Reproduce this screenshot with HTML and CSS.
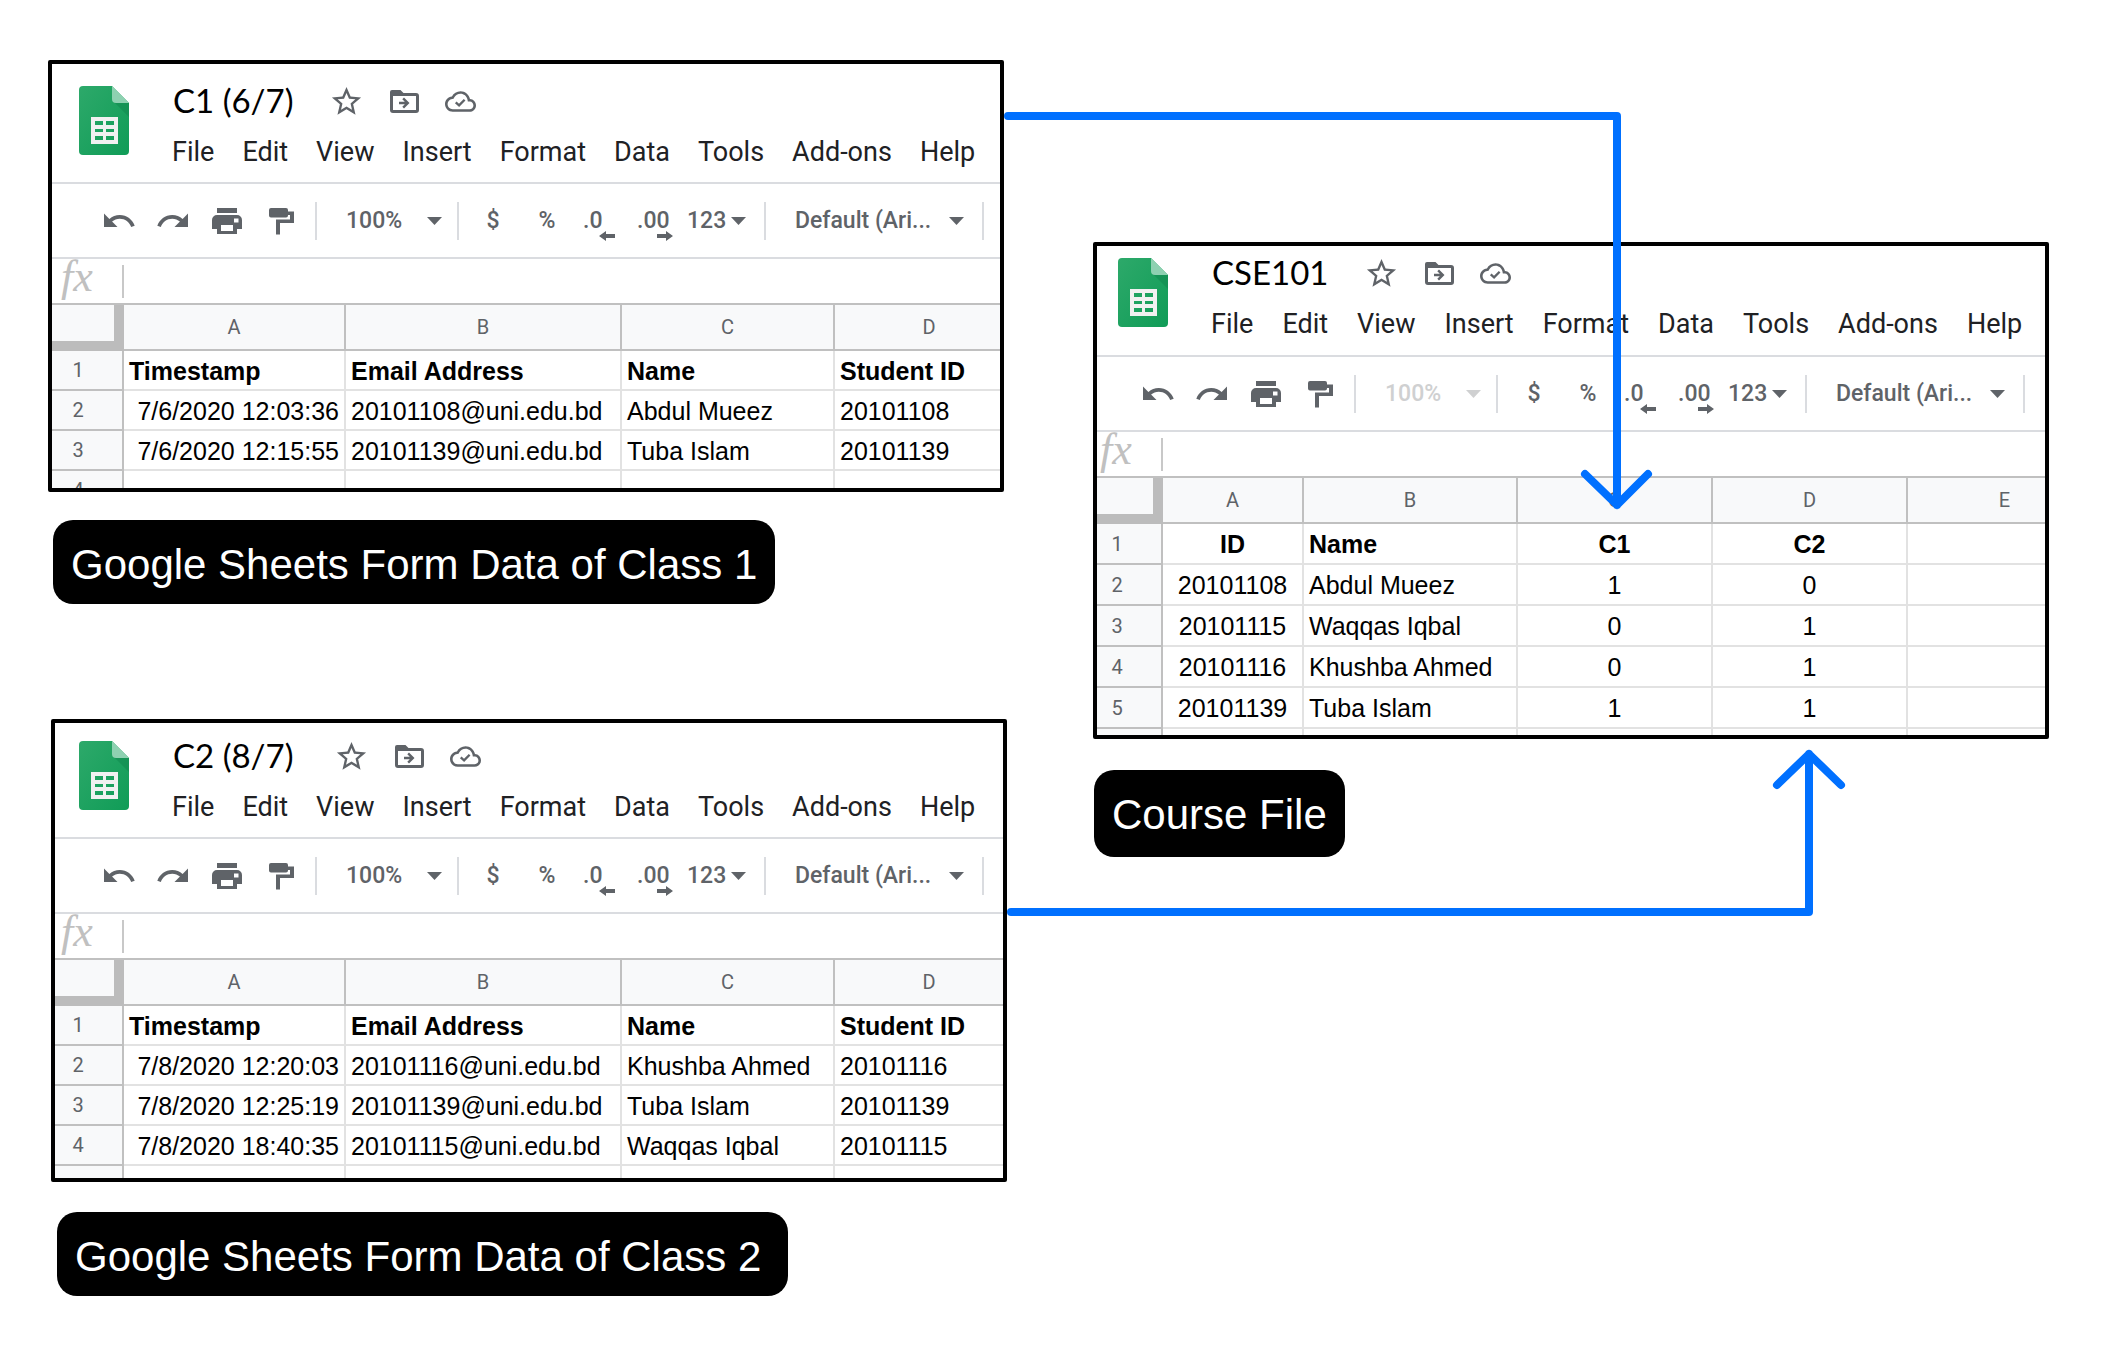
FILE: index.html
```html
<!DOCTYPE html>
<html lang="en">
<head>
<meta charset="utf-8">
<title>Attendance sheets flow</title>
<link rel="stylesheet" href="styles.css">
</head>
<body>
<svg class="sprite" aria-hidden="true">
  <symbol id="logo" viewBox="0 0 50 69">
    <path fill="url(#leaf)" d="M4 0H33L50 17V65a4 4 0 0 1-4 4H4a4 4 0 0 1-4-4V4a4 4 0 0 1 4-4z"/>
    <path fill="#128b50" opacity=".6" d="M35 16L50 31V17z"/>
    <path fill="#8ed1b1" d="M33 0L50 17H37a4 4 0 0 1-4-4z"/>
    <path fill="#f1f1f1" fill-rule="evenodd" d="M12 31H39V58H12zM16 35V39H24V35zM27 35V39H35V35zM16 43V46H24V43zM27 43V46H35V43zM16 50V54H24V50zM27 50V54H35V50z"/>
  </symbol>
  <symbol id="star" viewBox="0 0 24 24"><path d="M22 9.24l-7.19-.62L12 2 9.19 8.63 2 9.24l5.46 4.73L5.82 21 12 17.27 18.18 21l-1.63-7.03L22 9.24zM12 15.4l-3.76 2.27 1-4.28-3.32-2.88 4.38-.38L12 6.1l1.71 4.04 4.38.38-3.32 2.88 1 4.28L12 15.4z"/></symbol>
  <symbol id="move" viewBox="0 0 35 35"><path fill-rule="evenodd" d="M5 6H13.500L16.500 9H29a3 3 0 0 1 3 3V26a3 3 0 0 1-3 3H6a3 3 0 0 1-3-3V8a2 2 0 0 1 2-2zM6 12V26H29V12z"/><path d="M17 13.500L22.500 19L17 24.500L15.300 22.800L17.800 20.300H12V17.700H17.800L15.300 15.200z"/></symbol>
  <symbol id="cloud" viewBox="0 0 24 24"><path d="M19.350 10.040C18.670 6.590 15.640 4 12 4 9.110 4 6.610 5.640 5.360 8.040 2.350 8.360 0 10.910 0 14c0 3.310 2.690 6 6 6h13c2.760 0 5-2.240 5-5 0-2.640-2.050-4.780-4.650-4.960zM19 18H6c-2.210 0-4-1.790-4-4 0-2.050 1.530-3.760 3.560-3.970l1.070-.11.5-.95C8.080 7.140 9.940 6 12 6c2.620 0 4.880 1.860 5.390 4.430l.3 1.500 1.530.11c1.560.1 2.780 1.410 2.780 2.960 0 1.650-1.350 3-3 3z"/><path fill="none" stroke="currentColor" stroke-width="1.800" d="M8.300 12.700L10.900 15L15.200 10.600"/></symbol>
  <symbol id="undo" viewBox="0 0 24 24"><path d="M12.500 8c-2.650 0-5.050.99-6.900 2.600L2 7v9h9l-3.620-3.620c1.390-1.160 3.160-1.880 5.120-1.880 3.540 0 6.550 2.310 7.600 5.500l2.370-.78C21.080 11.030 17.150 8 12.500 8z"/></symbol>
  <symbol id="redo" viewBox="0 0 24 24"><path d="M18.400 10.600C16.550 8.990 14.150 8 11.500 8c-4.650 0-8.580 3.030-9.960 7.220L3.900 16c1.050-3.190 4.050-5.500 7.600-5.500 1.950 0 3.730.72 5.120 1.880L13 16h9V7l-3.600 3.600z"/></symbol>
  <symbol id="print" viewBox="0 0 36 36"><path fill-rule="evenodd" d="M8 5H28V10H8zM8 12H28a5 5 0 0 1 5 5V26H28V31H8V26H3V17a5 5 0 0 1 5-5zM12 22V28H24V22zM25 15.500V19.500H29.500V15.500z"/></symbol>
  <symbol id="paint" viewBox="0 0 36 36"><path d="M8 5H23a2 2 0 0 1 2 2V8.500H31V20H17V31.500H13V16.500H27V12H25V12.500a2 2 0 0 1-2 2H8a2 2 0 0 1-2-2V7a2 2 0 0 1 2-2z"/></symbol>
  <symbol id="caret" viewBox="0 0 15 8"><path d="M0 0H15L7.500 8z"/></symbol>
  <symbol id="arrow" viewBox="0 0 16 10"><path d="M0 3H9V0L16 5L9 10V7H0z"/></symbol>
  <defs><linearGradient id="leaf" x1="0" y1="0" x2="1" y2="1"><stop offset="0" stop-color="#2da96a"/><stop offset="1" stop-color="#109c57"/></linearGradient></defs>
</svg>

<main class="diagram">
  <div class="sources">
    <figure class="node node-first">
      <section class="sheet" aria-label="C1 (6/7)">
        <div class="sheet-body">
          <header class="head">
            <svg class="logo"><use href="#logo"/></svg>
            <div>
              <div class="title-row">
                <h2 class="title">C1 (6/7)</h2>
                <button class="icon-button" aria-label="Star"><svg class="icon-title"><use href="#star"/></svg></button>
                <button class="icon-button" aria-label="Move"><svg class="icon-title"><use href="#move"/></svg></button>
                <button class="icon-button" aria-label="Saved to Drive"><svg class="icon-cloud"><use href="#cloud"/></svg></button>
              </div>
              <nav class="menu">
                <button>File</button><button>Edit</button><button>View</button><button>Insert</button><button>Format</button><button>Data</button><button>Tools</button><button>Add-ons</button><button>Help</button>
              </nav>
            </div>
          </header>
          <div class="toolbar">
            <button class="tool" aria-label="Undo"><svg class="icon"><use href="#undo"/></svg></button>
            <button class="tool" aria-label="Redo"><svg class="icon"><use href="#redo"/></svg></button>
            <button class="tool" aria-label="Print"><svg class="icon"><use href="#print"/></svg></button>
            <button class="tool" aria-label="Paint format"><svg class="icon"><use href="#paint"/></svg></button>
            <span class="rule"></span>
            <label class="picker picker-zoom"><select aria-label="Zoom"><option>100%</option></select><svg class="caret"><use href="#caret"/></svg></label>
            <span class="rule"></span>
            <button class="tool">$</button>
            <button class="tool">%</button>
            <button class="tool decimals">.0<svg class="step step-less"><use href="#arrow"/></svg></button>
            <button class="tool decimals">.00<svg class="step"><use href="#arrow"/></svg></button>
            <button class="formats">123<svg class="caret"><use href="#caret"/></svg></button>
            <span class="rule"></span>
            <label class="picker picker-font"><select aria-label="Font"><option>Default (Ari...</option></select><svg class="caret"><use href="#caret"/></svg></label>
            <span class="rule"></span>
          </div>
          <label class="formula"><span class="fx">fx</span><input aria-label="Formula"></label>
          <div class="view">
            <table>
              <colgroup><col class="c-gutter"><col class="c-stamp"><col class="c-mail"><col class="c-person"><col class="c-sid"></colgroup>
              <thead><tr><th class="corner"></th><th>A</th><th>B</th><th>C</th><th>D</th></tr></thead>
              <tbody>
                <tr class="names"><th>1</th><td>Timestamp</td><td>Email Address</td><td>Name</td><td>Student ID</td></tr>
                <tr><th>2</th><td class="right">7/6/2020 12:03:36</td><td>20101108@uni.edu.bd</td><td>Abdul Mueez</td><td>20101108</td></tr>
                <tr><th>3</th><td class="right">7/6/2020 12:15:55</td><td>20101139@uni.edu.bd</td><td>Tuba Islam</td><td>20101139</td></tr>
                <tr><th>4</th><td></td><td></td><td></td><td></td></tr>
              </tbody>
            </table>
          </div>
        </div>
      </section>
      <figcaption class="caption">Google Sheets Form Data of Class 1</figcaption>
    </figure>

    <figure class="node node-second">
      <section class="sheet" aria-label="C2 (8/7)">
        <div class="sheet-body">
          <header class="head">
            <svg class="logo"><use href="#logo"/></svg>
            <div>
              <div class="title-row">
                <h2 class="title">C2 (8/7)</h2>
                <button class="icon-button" aria-label="Star"><svg class="icon-title"><use href="#star"/></svg></button>
                <button class="icon-button" aria-label="Move"><svg class="icon-title"><use href="#move"/></svg></button>
                <button class="icon-button" aria-label="Saved to Drive"><svg class="icon-cloud"><use href="#cloud"/></svg></button>
              </div>
              <nav class="menu">
                <button>File</button><button>Edit</button><button>View</button><button>Insert</button><button>Format</button><button>Data</button><button>Tools</button><button>Add-ons</button><button>Help</button>
              </nav>
            </div>
          </header>
          <div class="toolbar">
            <button class="tool" aria-label="Undo"><svg class="icon"><use href="#undo"/></svg></button>
            <button class="tool" aria-label="Redo"><svg class="icon"><use href="#redo"/></svg></button>
            <button class="tool" aria-label="Print"><svg class="icon"><use href="#print"/></svg></button>
            <button class="tool" aria-label="Paint format"><svg class="icon"><use href="#paint"/></svg></button>
            <span class="rule"></span>
            <label class="picker picker-zoom"><select aria-label="Zoom"><option>100%</option></select><svg class="caret"><use href="#caret"/></svg></label>
            <span class="rule"></span>
            <button class="tool">$</button>
            <button class="tool">%</button>
            <button class="tool decimals">.0<svg class="step step-less"><use href="#arrow"/></svg></button>
            <button class="tool decimals">.00<svg class="step"><use href="#arrow"/></svg></button>
            <button class="formats">123<svg class="caret"><use href="#caret"/></svg></button>
            <span class="rule"></span>
            <label class="picker picker-font"><select aria-label="Font"><option>Default (Ari...</option></select><svg class="caret"><use href="#caret"/></svg></label>
            <span class="rule"></span>
          </div>
          <label class="formula"><span class="fx">fx</span><input aria-label="Formula"></label>
          <div class="view">
            <table>
              <colgroup><col class="c-gutter"><col class="c-stamp"><col class="c-mail"><col class="c-person"><col class="c-sid"></colgroup>
              <thead><tr><th class="corner"></th><th>A</th><th>B</th><th>C</th><th>D</th></tr></thead>
              <tbody>
                <tr class="names"><th>1</th><td>Timestamp</td><td>Email Address</td><td>Name</td><td>Student ID</td></tr>
                <tr><th>2</th><td class="right">7/8/2020 12:20:03</td><td>20101116@uni.edu.bd</td><td>Khushba Ahmed</td><td>20101116</td></tr>
                <tr><th>3</th><td class="right">7/8/2020 12:25:19</td><td>20101139@uni.edu.bd</td><td>Tuba Islam</td><td>20101139</td></tr>
                <tr><th>4</th><td class="right">7/8/2020 18:40:35</td><td>20101115@uni.edu.bd</td><td>Waqqas Iqbal</td><td>20101115</td></tr>
                <tr><th></th><td></td><td></td><td></td><td></td></tr>
              </tbody>
            </table>
          </div>
        </div>
      </section>
      <figcaption class="caption">Google Sheets Form Data of Class 2</figcaption>
    </figure>
  </div>

  <figure class="node node-course">
    <section class="sheet" aria-label="CSE101">
      <div class="sheet-body">
        <header class="head">
          <svg class="logo"><use href="#logo"/></svg>
          <div>
            <div class="title-row">
              <h2 class="title">CSE101</h2>
              <button class="icon-button" aria-label="Star"><svg class="icon-title"><use href="#star"/></svg></button>
              <button class="icon-button" aria-label="Move"><svg class="icon-title"><use href="#move"/></svg></button>
              <button class="icon-button" aria-label="Saved to Drive"><svg class="icon-cloud"><use href="#cloud"/></svg></button>
            </div>
            <nav class="menu">
              <button>File</button><button>Edit</button><button>View</button><button>Insert</button><button>Format</button><button>Data</button><button>Tools</button><button>Add-ons</button><button>Help</button>
            </nav>
          </div>
        </header>
        <div class="toolbar">
          <button class="tool" aria-label="Undo"><svg class="icon"><use href="#undo"/></svg></button>
          <button class="tool" aria-label="Redo"><svg class="icon"><use href="#redo"/></svg></button>
          <button class="tool" aria-label="Print"><svg class="icon"><use href="#print"/></svg></button>
          <button class="tool" aria-label="Paint format"><svg class="icon"><use href="#paint"/></svg></button>
          <span class="rule"></span>
          <label class="picker picker-zoom is-disabled"><select aria-label="Zoom" disabled><option>100%</option></select><svg class="caret"><use href="#caret"/></svg></label>
          <span class="rule"></span>
          <button class="tool">$</button>
          <button class="tool">%</button>
          <button class="tool decimals">.0<svg class="step step-less"><use href="#arrow"/></svg></button>
          <button class="tool decimals">.00<svg class="step"><use href="#arrow"/></svg></button>
          <button class="formats">123<svg class="caret"><use href="#caret"/></svg></button>
          <span class="rule"></span>
          <label class="picker picker-font"><select aria-label="Font"><option>Default (Ari...</option></select><svg class="caret"><use href="#caret"/></svg></label>
          <span class="rule"></span>
        </div>
        <label class="formula"><span class="fx">fx</span><input aria-label="Formula"></label>
        <div class="view">
          <table>
            <colgroup><col class="c-gutter"><col class="c-id"><col class="c-name"><col class="c-mark"><col class="c-mark"><col class="c-mark"></colgroup>
            <thead><tr><th class="corner"></th><th>A</th><th>B</th><th>C</th><th>D</th><th>E</th></tr></thead>
            <tbody>
              <tr class="names"><th>1</th><td class="center">ID</td><td>Name</td><td class="center">C1</td><td class="center">C2</td><td></td></tr>
              <tr><th>2</th><td class="center">20101108</td><td>Abdul Mueez</td><td class="center">1</td><td class="center">0</td><td></td></tr>
              <tr><th>3</th><td class="center">20101115</td><td>Waqqas Iqbal</td><td class="center">0</td><td class="center">1</td><td></td></tr>
              <tr><th>4</th><td class="center">20101116</td><td>Khushba Ahmed</td><td class="center">0</td><td class="center">1</td><td></td></tr>
              <tr><th>5</th><td class="center">20101139</td><td>Tuba Islam</td><td class="center">1</td><td class="center">1</td><td></td></tr>
              <tr><th></th><td></td><td></td><td></td><td></td><td></td></tr>
            </tbody>
          </table>
        </div>
      </div>
    </section>
    <figcaption class="caption">Course File</figcaption>
    <svg class="links" viewBox="0 0 850 810" aria-hidden="true">
      <path d="M4 4H613V393M581 362L613 393L644 362"/>
      <path d="M7 800H805V642M773 673L805 642L837 673"/>
    </svg>
  </figure>
</main>
</body>
</html>
```

FILE: styles.css
```css
* { box-sizing: border-box; }

body {
  margin: 0;
  background: #fff;
  color: #000;
  font-family: Roboto, "Liberation Sans", sans-serif;
}

svg { display: block; flex: none; fill: currentColor; }
.sprite { position: absolute; width: 0; height: 0; }

button, select, input {
  appearance: none;
  margin: 0;
  padding: 0;
  border: 0;
  background: none;
  color: inherit;
  font: inherit;
}

.diagram {
  display: grid;
  grid-template-columns: minmax(0, 1fr) minmax(0, 1fr);
  gap: 89px;
  align-items: start;
  padding: 60px 57px 50px 48px;
}

.sources { display: grid; gap: 115px; }
.node { --title-gap: 13px; --menu-gap: 28px; --tool-gap: 7px; margin: 0; min-width: 0; }

.node-first { --bleed: -18px; --head-top: 17px; --view: 183px; --row: 40px; --drop: 28px; --indent: 5px; }
.node-second { --bleed: -21px; --head-top: 13px; --view: 218px; --row: 40px; --drop: 30px; --indent: 6px; --title-gap: 18px; margin: 0 -3px 0 3px; }
.node-course { --bleed: -24px; --head-top: 7px; --view: 257px; --row: 41px; --drop: 31px; --indent: 1px; --menu-gap: 29px; --tool-gap: 9px; position: relative; margin-top: 182px; }

/* Sheet window */
.sheet { border: 4px solid #000; border-radius: 2px; overflow: hidden; background: #fff; }
.sheet-body { margin-left: var(--bleed); }

.head {
  display: flex;
  gap: 43px;
  padding: var(--head-top) 0 14px 45px;
  border-bottom: 2px solid #dadce0;
}
.node-course .head { padding-bottom: 15px; }
.logo { width: 50px; height: 69px; margin-top: 5px; }

.title-row { display: flex; align-items: center; gap: 23px; height: 40px; margin-bottom: 15px; color: #5f6368; }
.title { margin: 0 var(--title-gap) 0 0; padding: 0 0 2px 1px; color: #000; font: 400 33px/36px Lato, sans-serif; white-space: nowrap; }
.icon-title { width: 35px; height: 35px; }
.icon-cloud { width: 31px; height: 31px; }

.menu { display: flex; gap: var(--menu-gap); color: #202124; font-size: 27px; line-height: 32px; white-space: nowrap; }

.toolbar {
  display: flex;
  align-items: center;
  height: 75px;
  padding-left: 58px;
  border-bottom: 2px solid #dadce0;
  color: #5f6368;
  font-size: 23px;
  font-weight: 500;
  line-height: 32px;
}
.tool { flex: none; width: 54px; padding: 0 9px; }
.icon { width: 36px; height: 36px; }
.rule { flex: none; width: 2px; height: 38px; margin-left: 7px; background: #dadce0; }
.caret { width: 15px; height: 8px; }

.picker { display: flex; flex: none; align-items: center; justify-content: space-between; padding-left: 29px; }
.picker-zoom { width: 133px; padding-right: 8px; }
.picker-zoom + .rule { margin-right: var(--tool-gap); }
.picker-font { width: 209px; padding-right: 11px; }
.is-disabled { color: #cfd0d1; }
.picker select { opacity: 1; }

.decimals { position: relative; text-align: left; }
.step { position: absolute; right: 9px; bottom: -4px; width: 16px; height: 10px; }
.step-less { right: 13px; rotate: 180deg; }
.formats { display: flex; flex: none; align-items: center; gap: 5px; width: 75px; padding-left: 5px; }

.formula { display: flex; align-items: center; height: 46px; border-bottom: 2px solid #c0c0c0; }
.fx { width: 88px; padding: 0 0 8px 27px; color: #c0c0c0; font: italic 44px/36px "Liberation Serif", serif; }
.formula input { flex: 1; min-width: 0; height: 33px; border-left: 2px solid #c8c8c8; }

/* Cells */
.view { height: var(--view); overflow: hidden; }
table { width: 0; border-collapse: separate; border-spacing: 0; table-layout: fixed; }
.c-gutter { width: 90px; }
.c-stamp { width: 222px; }
.c-mail { width: 276px; }
.c-person { width: 213px; }
.c-sid { width: 190px; }
.c-id { width: 141px; }
.c-name { width: 214px; }
.c-mark { width: 195px; }

th {
  height: 46px;
  padding: 0;
  border: solid #c0c0c0;
  border-width: 0 2px 2px 0;
  background: #f8f9fa;
  color: #5f6368;
  font-size: 20px;
  font-weight: 400;
  line-height: 24px;
}
.corner { border: solid #bcbcbc; border-width: 0 10px 10px 0; }

td {
  height: var(--row);
  padding: 0 5px;
  border: solid #e2e2e2;
  border-width: 0 2px 2px 0;
  font: 25px/36px "Liberation Sans", Arial, sans-serif;
  white-space: nowrap;
}
.sources td { padding-top: 2px; }
tbody th { height: var(--row); }
.names td { font-weight: 700; }
.right { text-align: right; }
.center { text-align: center; }

.caption {
  width: fit-content;
  margin: var(--drop) 0 0 var(--indent);
  padding: 21px 18px 15px;
  border-radius: 20px;
  background: #000;
  color: #fff;
  font: 42px/48px "Liberation Sans", Arial, sans-serif;
  white-space: nowrap;
}
.node-second .caption { padding-right: 27px; }
.node-course .caption { padding-bottom: 18px; }

/* Connectors drawn over the sheets */
.links {
  position: absolute;
  top: -130px;
  left: -89px;
  width: 850px;
  height: 810px;
  fill: none;
  stroke: #0070ff;
  stroke-width: 8px;
  stroke-linecap: round;
  stroke-linejoin: round;
  pointer-events: none;
}
```
